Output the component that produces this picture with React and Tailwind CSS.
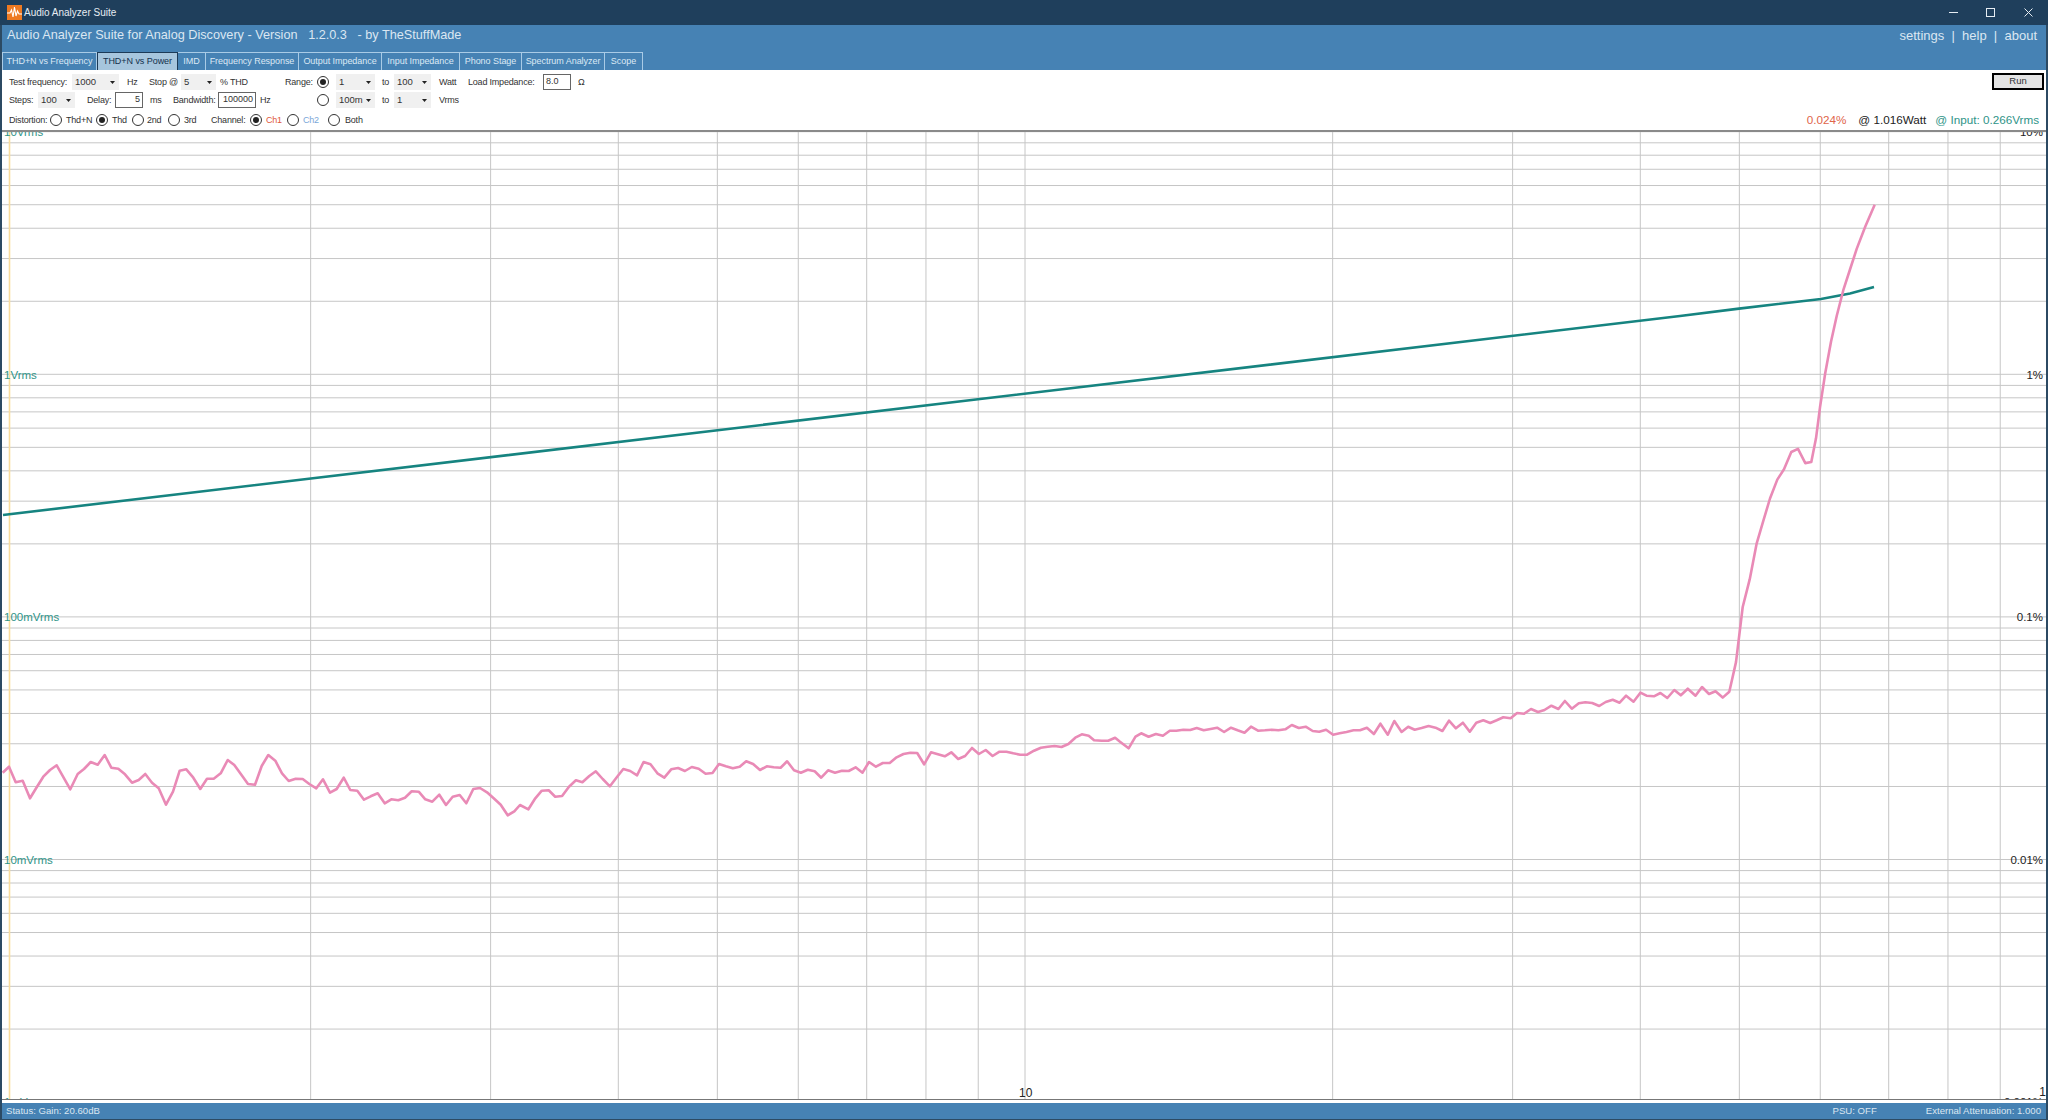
const Z6 = [[8,128],[27,110],[47,157],[68,152],[90,205],[110,172],[130,140],[150,120],[170,106],[211,178],[233,132],[252,117],[272,96],[293,104],[314,75],[334,113],[355,116],[375,133],[396,158],[416,150],[436,132],[456,158],[476,175],[498,224],[519,185],[539,122],[559,118],[580,143],[601,177],[621,146],[641,146],[662,130],[683,90],[703,105],[723,133],[744,162],[765,164],[785,108],[805,75],[826,92],[846,130],[866,153],[887,146],[908,147],[928,162],[949,175],[969,148],[990,188],[1010,177],[1031,143],[1051,180],[1072,182],[1092,209],[1112,199],[1133,190],[1154,220],[1174,208],[1195,211],[1215,203],[1235,184],[1256,185],[1276,208],[1297,215],[1318,194],[1338,225],[1358,200],[1379,195],[1399,220],[1420,177],[1440,174],[1461,187],[1481,205],[1502,224],[1523,256],[1543,244]];
const Z7 = [[0,285],[22,298],[40,265],[57,242],[75,241],[92,260],[110,258],[128,230],[146,211],[163,217],[181,198],[198,184],[216,207],[235,229],[252,203],[270,177],[288,183],[306,196],[323,156],[341,163],[359,190],[377,203],[395,178],[413,174],[431,183],[449,171],[467,176],[485,191],[503,189],[520,162],[538,169],[556,175],[574,170],[591,154],[609,162],[627,180],[645,169],[663,172],[681,173],[698,154],[716,181],[734,188],[752,179],[770,184],[787,203],[805,181],[823,188],[841,182],[859,183],[877,172],[895,188],[912,156],[930,170],[948,159],[966,159],[984,142],[1002,132],[1020,128],[1038,129],[1056,163],[1074,127],[1092,133],[1110,139],[1127,127],[1145,147],[1163,138],[1181,114],[1199,132],[1217,120],[1235,138],[1253,125],[1271,125],[1289,130],[1307,134],[1325,134],[1343,122],[1361,113],[1379,110],[1397,108],[1415,111],[1433,102],[1451,83],[1468,73],[1486,77],[1500,91],[1520,92],[1537,92],[1555,83]];
const Z8 = [[0,185],[21,205],[38,170],[52,160],[70,170],[88,162],[105,167],[122,152],[138,152],[155,149],[172,150],[188,144],[205,151],[222,147],[238,143],[255,156],[272,143],[288,151],[305,158],[321,140],[338,152],[355,151],[372,149],[388,151],[405,148],[421,135],[438,144],[455,140],[472,153],[488,155],[505,149],[522,164],[538,160],[555,156],[572,151],[588,151],[605,143],[622,162],[638,131],[656,164],[672,123],[690,156],[706,140],[722,149],[739,144],[756,138],[773,143],[790,153],[806,122],[823,145],[840,128],[857,155],[873,128],[890,121],[907,129],[923,121],[939,112],[957,115],[973,99],[990,101],[1007,87],[1024,96],[1040,90],[1057,77],[1074,87],[1090,63],[1107,86],[1124,70],[1140,67],[1157,69],[1174,78],[1190,66],[1207,59],[1224,68],[1240,47],[1258,65],[1275,38],[1290,47],[1308,49],[1324,39],[1341,54],[1358,30],[1374,46],[1391,26],[1410,47],[1426,21],[1443,42],[1459,34]];
const Z5 = [[128,1503],[148,1486],[168,1400],[188,1240],[209,1160],[230,1055],[250,990],[270,925],[292,870],[312,840],[334,790],[354,781],[376,822],[394,819],[408,750],[420,660],[436,560],[453,470],[470,395],[490,320],[510,260],[530,200],[556,135],[584,72]];

const pink = [
  ...Z6.map(([x, y]) => [x / 3, 730 + y / 3]),
  ...Z7.map(([x, y]) => [520 + x / 2.613, 710 + y / 3]),
  ...Z8.map(([x, y]) => [1120 + x / 2.45, 680 + y / 3]),
  ...Z5.map(([x, y]) => [1680 + x / 3, 180 + y / 2.904]),
];
const teal = [[3, 515], [1680, 316], [1739, 308.6], [1821, 299], [1850, 293.5], [1874, 287]];
const toPts = (a) => a.map(([x, y]) => `${x.toFixed(1)},${y.toFixed(1)}`).join(" ");

const TOP = 131.7;
const DEC = 242.6;
const hLines = [];
for (let d = 0; d < 4; d++) {
  for (let n = 10; n >= 1; n--) {
    if (n === 10 && d > 0) continue;
    hLines.push(TOP + DEC * (d + 1 - Math.log10(n)));
  }
}
const vLines = [];
for (const m of [1, 10]) {
  for (let n = 2; n <= 9; n++) vLines.push(3 + 1022 * Math.log10(n * m));
  if (m === 1) vLines.push(3 + 1022);
}

function Chart() {
  return (
    <svg className="absolute inset-0 h-full w-full" viewBox="2 132 2044 967" preserveAspectRatio="none">
      {hLines.map((y, i) => (
        <line key={i} x1="2" x2="2046" y1={y} y2={y} stroke="#c6c6c6" strokeWidth="1" />
      ))}
      {vLines.map((x, i) => (
        <line key={i} x1={x} x2={x} y1="132" y2="1100" stroke="#c6c6c6" strokeWidth="1" />
      ))}
      <line x1="9.5" x2="9.5" y1="132" y2="1100" stroke="#f9dc9c" strokeWidth="1.6" />
      <polyline points={toPts(teal)} fill="none" stroke="#168480" strokeWidth="2.6" />
      <polyline points={toPts(pink)} fill="none" stroke="#e98ab6" strokeWidth="2.6" strokeLinejoin="round" />
    </svg>
  );
}

function L({ c = "", children }) {
  return <div className={`shrink-0 whitespace-nowrap text-[9px] leading-[18px] tracking-[-0.2px] ${c}`}>{children}</div>;
}
function Combo({ c = "", children }) {
  return (
    <div className={`relative flex h-[16px] shrink-0 items-center bg-[#f0f0f0] pl-[3px] pt-[1px] text-[9.5px] ${c}`}>
      {children}
      <svg className="absolute right-[4px] top-[7px]" width="5" height="3" viewBox="0 0 5 3">
        <path d="M0 0H5L2.5 3Z" fill="#222" />
      </svg>
    </div>
  );
}
function Input({ c = "", children }) {
  return (
    <div className={`flex h-[16px] shrink-0 items-center border border-[#666] bg-white px-[2px] text-[9px] ${c}`}>
      {children}
    </div>
  );
}
function Radio({ on, c = "" }) {
  return (
    <div className={`flex h-[12px] w-[12px] shrink-0 items-center justify-center rounded-full border border-[#333] bg-white ${c}`}>
      {on && <div className="h-[6px] w-[6px] rounded-full bg-[#222]" />}
    </div>
  );
}
function Tab({ c = "", children, active }) {
  return (
    <div
      className={`flex h-[18px] shrink-0 items-center justify-center whitespace-nowrap text-[9px] tracking-[-0.05px] ${
        active
          ? "border-x border-t border-[#1c3a57] bg-[#a6c5dd] text-[#12304c]"
          : "border-r border-t border-[#a9cbe6] text-[#dce9f4]"
      } ${c}`}
    >
      {children}
    </div>
  );
}

export default function App() {
  return (
    <div className="flex h-[1120px] w-[2048px] flex-col overflow-hidden bg-white font-['Liberation_Sans',Arial,sans-serif] text-[#333]">
      <div className="flex h-[25px] shrink-0 items-center bg-[#1f3f5c] text-white">
        <svg className="ml-[7px]" width="15" height="15" viewBox="0 0 15 15">
          <rect width="15" height="15" fill="#ee7a22" />
          <path d="M0 8H3L4.5 5L6 12L7.5 2L9 11L10.5 6L12 9H15" fill="none" stroke="#fff" strokeWidth="1.1" />
        </svg>
        <div className="ml-[2px] whitespace-nowrap text-[10px] text-[#e6edf3]">Audio Analyzer Suite</div>
        <div className="ml-auto flex items-center text-white">
          <svg className="mr-[28px]" width="9" height="9" viewBox="0 0 9 9">
            <path d="M0 4.5H9" stroke="#e6edf3" strokeWidth="1" />
          </svg>
          <svg className="mr-[29px]" width="9" height="9" viewBox="0 0 9 9">
            <rect x="0.5" y="0.5" width="8" height="8" fill="none" stroke="#e6edf3" strokeWidth="1" />
          </svg>
          <svg className="mr-[15px]" width="9" height="9" viewBox="0 0 9 9">
            <path d="M0.5 0.5L8.5 8.5M8.5 0.5L0.5 8.5" stroke="#e6edf3" strokeWidth="1" />
          </svg>
        </div>
      </div>

      <div className="flex min-h-0 flex-1 flex-col border-x-2 border-b border-[#2c4a63]">
        <div className="flex h-[45px] shrink-0 flex-col bg-[#4682b4]">
          <div className="flex h-[27px] shrink-0 items-center justify-between pb-[5px] pl-[5px] pr-[9px] text-[12.7px] text-[#dbe7f2]">
            <div className="whitespace-pre">Audio Analyzer Suite for Analog Discovery - Version   1.2.0.3   - by TheStuffMade</div>
            <div className="whitespace-pre text-[13px]">settings  |  help  |  about</div>
          </div>
          <div className="flex h-[18px] shrink-0">
            <Tab c="w-[95px] border-l border-l-[#a9cbe6]">THD+N vs Frequency</Tab>
            <Tab c="w-[81px]" active>THD+N vs Power</Tab>
            <Tab c="w-[28px]">IMD</Tab>
            <Tab c="w-[93px]">Frequency Response</Tab>
            <Tab c="w-[83px]">Output Impedance</Tab>
            <Tab c="w-[78px]">Input Impedance</Tab>
            <Tab c="w-[62px]">Phono Stage</Tab>
            <Tab c="w-[83px]">Spectrum Analyzer</Tab>
            <Tab c="w-[38px]">Scope</Tab>
          </div>
        </div>

        <div className="flex h-[62px] shrink-0 justify-between border-b-2 border-[#8a8a8a] pt-[3px]">
          <div className="flex flex-col pl-[7px]">
            <div className="flex h-[18px] items-center">
              <L c="w-[63px]">Test frequency:</L>
              <Combo c="mr-[8px] w-[47px]">1000</Combo>
              <L c="w-[22px]">Hz</L>
              <L c="w-[32px]">Stop @</L>
              <Combo c="mr-[4px] w-[35px]">5</Combo>
              <L c="w-[65px]">% THD</L>
              <L c="w-[32px]">Range:</L>
              <Radio on c="mr-[7px]" />
              <Combo c="mr-[7px] w-[39px]">1</Combo>
              <L c="w-[12px]">to</L>
              <Combo c="mr-[8px] w-[37px]">100</Combo>
              <L c="w-[29px]">Watt</L>
              <L c="w-[75px]">Load Impedance:</L>
              <Input c="mr-[7px] w-[28px]">8.0</Input>
              <L>Ω</L>
            </div>
            <div className="flex h-[18px] items-center">
              <L c="w-[29px]">Steps:</L>
              <Combo c="mr-[12px] w-[37px]">100</Combo>
              <L c="w-[28px]">Delay:</L>
              <Input c="mr-[7px] w-[28px] justify-end">5</Input>
              <L c="w-[23px]">ms</L>
              <L c="w-[45px]">Bandwidth:</L>
              <Input c="mr-[4px] w-[38px] justify-end">100000</Input>
              <L c="w-[57px]">Hz</L>
              <Radio c="mr-[7px]" />
              <Combo c="mr-[7px] w-[39px]">100m</Combo>
              <L c="w-[12px]">to</L>
              <Combo c="mr-[8px] w-[37px]">1</Combo>
              <L>Vrms</L>
            </div>
            <div className="mt-[2px] flex h-[18px] items-center">
              <L c="w-[41px]">Distortion:</L>
              <Radio c="mr-[4px]" />
              <L c="w-[30px]">Thd+N</L>
              <Radio on c="mr-[4px]" />
              <L c="w-[20px]">Thd</L>
              <Radio c="mr-[3px]" />
              <L c="w-[21px]">2nd</L>
              <Radio c="mr-[4px]" />
              <L c="w-[27px]">3rd</L>
              <L c="w-[39px]">Channel:</L>
              <Radio on c="mr-[4px]" />
              <L c="w-[21px] text-[#e0573c]">Ch1</L>
              <Radio c="mr-[4px]" />
              <L c="w-[25px] text-[#7aa7d9]">Ch2</L>
              <Radio c="mr-[5px]" />
              <L>Both</L>
            </div>
          </div>
          <div className="flex flex-col items-end justify-between pb-[1px] pr-[2px]">
            <div className="flex h-[17px] w-[52px] items-center justify-center border-2 border-black bg-[#e4e4e4] text-[9.5px]">Run</div>
            <div className="mr-[5px] flex items-center whitespace-nowrap text-[11.7px]">
              <span className="mr-[12px] text-[#e0654a]">0.024%</span>
              <span className="mr-[9px] text-[#222]">@ 1.016Watt</span>
              <span className="text-[#2f9488]">@ Input: 0.266Vrms</span>
            </div>
          </div>
        </div>

        <div className="relative min-h-0 flex-1 overflow-hidden border-b border-[#777] bg-white text-[11.5px] leading-[14px]">
          <Chart />
          <div className="absolute left-[2px] top-[-7px] text-[#2f9488]">10Vrms</div>
          <div className="absolute left-[2px] top-[236px] text-[#2f9488]">1Vrms</div>
          <div className="absolute left-[2px] top-[478px] text-[#2f9488]">100mVrms</div>
          <div className="absolute left-[2px] top-[721px] text-[#2f9488]">10mVrms</div>
          <div className="absolute left-[2px] top-[963px] text-[#2f9488]">1mVrms</div>
          <div className="absolute right-[3px] top-[-7px] text-[#222]">10%</div>
          <div className="absolute right-[3px] top-[236px] text-[#222]">1%</div>
          <div className="absolute right-[3px] top-[478px] text-[#222]">0.1%</div>
          <div className="absolute right-[3px] top-[721px] text-[#222]">0.01%</div>
          <div className="absolute right-[3px] top-[963px] text-[#222]">0.001%</div>
          <div className="absolute left-[1017px] top-[954px] text-[12px] text-[#222]">10</div>
          <div className="absolute right-[0px] top-[953px] text-[12px] text-[#222]">1</div>
        </div>
        <div className="h-[3px] shrink-0 bg-white" />
        <div className="flex h-[16px] shrink-0 items-center bg-[#4682b4] pl-[4px] pr-[5px] text-[9.6px] text-[#dbe7f2]">
          <div>Status: Gain: 20.60dB</div>
          <div className="ml-auto mr-[49px]">PSU: OFF</div>
          <div>External Attenuation: 1.000</div>
        </div>
      </div>
    </div>
  );
}
